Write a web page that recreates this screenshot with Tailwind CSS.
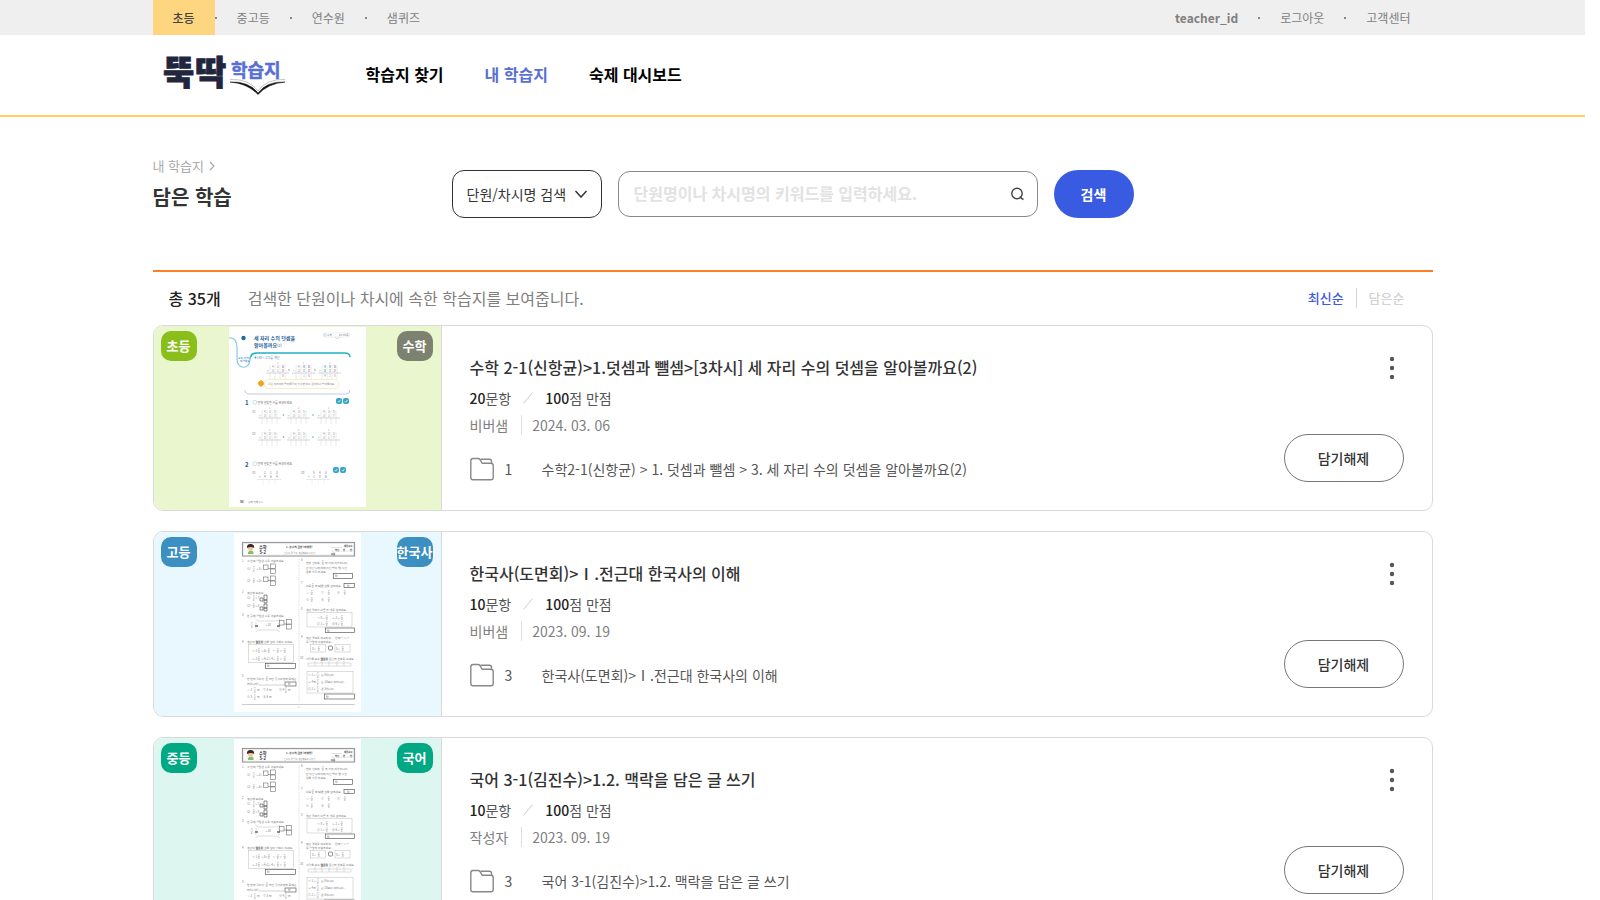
<!DOCTYPE html>
<html lang="ko">
<head>
<meta charset="utf-8">
<meta name="viewport" content="width=device-width, initial-scale=1">
<title>담은 학습</title>
<script src="https://cdn.jsdelivr.net/npm/@tailwindcss/browser@4"></script>
</head>
<body class="bg-white pr-[15px] font-['Noto_Sans_CJK_KR','Noto_Sans',sans-serif] text-sm text-[#333]">

<!-- Shared drawings -->
<svg width="0" height="0" class="absolute" aria-hidden="true">
  <defs>
    <g id="sum">
      <path d="M4 0V14M9 0V14M14 0V14M19 0V14" stroke="#d4d4d4" stroke-width=".5"/>
      <path d="M0 8H23" stroke="#bbb" stroke-width=".6"/>
      <g font-size="3" fill="#888">
        <text x="6" y="3">4</text><text x="11" y="3">3</text><text x="16" y="3">5</text>
        <text x="1" y="7">+</text><text x="6" y="7">3</text><text x="11" y="7">1</text><text x="16" y="7">7</text>
      </g>
      <text x="11" y="-1" font-size="2.5" fill="#e0609a">1</text>
    </g>
    <g id="frac" fill="#777" font-size="2.6"><text x="0" y="-.6">7</text><path d="M-.4 0H2" stroke="#888" stroke-width=".4"/><text x="0" y="2.6">8</text></g>
    <g id="boxes" fill="#fff" stroke="#555" stroke-width=".5">
      <rect x="0" y="1" width="4.5" height="4.5"/><path d="M4.500 4.500H7"/><rect x="7" y="0" width="5" height="4.500"/><rect x="7" y="5" width="5" height="4.500"/>
    </g>
    <g id="tick"><rect width="6" height="6" rx="2" fill="#35a6c6"/><path d="M1.700 3L2.800 4.200L4.500 1.800" stroke="#fff" stroke-width=".7" fill="none"/></g>

    <symbol id="sheet-sum" viewBox="0 0 137 180">
      <rect width="137" height="180" fill="#fff"/>
      <path d="M0 11C6 10 8 15 8 21V32C8 43 21 43 21 32Q21 27 26 27" fill="none" stroke="#86cbe0" stroke-width="1.200"/>
      <circle cx="14.500" cy="11" r="2.200" fill="#1b6da3"/>
      <g font-weight="700" fill="#1f5d98" font-size="5">
        <text x="25" y="13">세 자리 수의 덧셈을</text><text x="25" y="19.500">알아볼까요<tspan font-weight="400" font-size="4">(2)</tspan></text>
      </g>
      <text x="9" y="31.500" font-size="2.600" fill="#2b80b5">교과 개념이<tspan x="11" dy="3">해결돼요</tspan></text>
      <rect x="94" y="6" width="27" height="4" rx="2" fill="#fff" stroke="#ddd" stroke-width=".5"/>
      <rect x="95" y="7" width="2" height="2" fill="none" stroke="#7bc6d6" stroke-width=".4"/>
      <text x="98" y="9" font-size="2.600" fill="#777">수학</text><text x="110" y="9" font-size="2.600" fill="#777">82~85쪽</text>
      <path d="M106 10L108 12L111 10" fill="none" stroke="#bbb" stroke-width=".5"/>
      <path d="M22 30Q22 26 28 26H115Q121 26 121 30" fill="none" stroke="#1eb2c3" stroke-width="1.500"/>
      <path d="M16 63Q16 67 21 67H117Q121 67 121 63" fill="none" stroke="#9ba8c0" stroke-width=".6"/>
      <circle cx="26.500" cy="30.500" r="1" fill="#29a8c8"/><text x="28" y="32" font-size="3" fill="#4a88a8">143 + 272를 계산</text>
      <use href="#sum" x="37" y="38"/><use href="#sum" x="63" y="38"/><use href="#sum" x="89" y="38"/>
      <g font-size="3" fill="#cf62a4"><text x="53" y="41">3</text><text x="53" y="45">2</text><text x="53" y="50">5</text><text x="79" y="41">3</text><text x="79" y="45">2</text><text x="79" y="50">5</text><text x="105" y="41">3</text><text x="105" y="45">2</text><text x="105" y="50">5</text></g>
      <g font-size="3" fill="#35bfae"><text x="74" y="41">4</text><text x="74" y="45">7</text><text x="74" y="50">1</text><text x="95" y="41">1</text><text x="100" y="41">4</text><text x="95" y="45">2</text><text x="100" y="45">7</text><text x="95" y="50">4</text><text x="100" y="50">1</text></g>
      <path d="M32 53L36 56.500L32 60L28.500 56.500Z" fill="#f0a31e"/><circle cx="32" cy="56.300" r="2.600" fill="#f4a51c"/>
      <rect x="35" y="52.500" width="75" height="9" rx="4.500" fill="#fffefa" stroke="#f2dfae" stroke-width=".6"/>
      <text x="39" y="58" font-size="2.700" fill="#888">같은 자리끼리 받아올림이 있으면 바로 윗자리로 받아올려요</text>
      <g font-weight="700" fill="#245b96" font-size="6"><text x="16" y="78">1</text><text x="16" y="139.500">2</text></g>
      <g fill="#fff" stroke="#9fd1e6" stroke-width=".6"><rect x="24" y="73.500" width="3.500" height="3.500" rx="1"/><rect x="24" y="135" width="3.500" height="3.500" rx="1"/></g>
      <g fill="#666" font-size="2.900"><text x="28.500" y="76.500">안에 알맞은 수를 써넣으세요.</text><text x="28.500" y="138">안에 알맞은 수를 써넣으세요.</text>
        <text x="23" y="85.500">(1)</text><text x="23" y="108">(2)</text><text x="23" y="147">(1)</text><text x="72" y="147">(2)</text></g>
      <use href="#tick" x="107" y="71"/><use href="#tick" x="114" y="71"/><use href="#tick" x="104" y="140"/><use href="#tick" x="111" y="140"/>
      <use href="#sum" x="29" y="83"/><use href="#sum" x="58" y="83"/><use href="#sum" x="88" y="83"/>
      <use href="#sum" x="29" y="105"/><use href="#sum" x="58" y="105"/><use href="#sum" x="88" y="105"/>
      <path d="M59 43H61M60 42V44M85 43H87M86 42V44M53.500 88H55.500M54.500 87V89M83 88H85M84 87V89M53.500 110H55.500M54.500 109V111M83 110H85M84 109V111" stroke="#58a89c" stroke-width=".5"/>
      <g font-size="3" fill="#777"><text x="35" y="147">2</text><text x="41" y="147">1</text><text x="47" y="147">3</text><text x="30" y="151">+</text><text x="35" y="151">4</text><text x="41" y="151">6</text><text x="47" y="151">9</text>
        <text x="84" y="147">5</text><text x="90" y="147">4</text><text x="96" y="147">3</text><text x="79" y="151">+</text><text x="84" y="151">1</text><text x="90" y="151">8</text><text x="96" y="151">6</text></g>
      <path d="M28 152.500H52M77 152.500H101" stroke="#ccc" stroke-width=".5"/>
      <path d="M34 153V158M40 153V158M46 153V158M83 153V158M89 153V158M95 153V158" stroke="#e6e6e6" stroke-width=".5"/>
      <text x="11" y="175.500" font-size="3" font-weight="700" fill="#444">50</text><text x="19" y="175.500" font-size="2.600" fill="#777">수학 익힘 2-1</text>
    </symbol>

    <symbol id="sheet-frac" viewBox="0 0 127 179">
      <rect width="127" height="179" fill="#fff"/>
      <rect x="8.500" y="9.500" width="112" height="13.500" fill="#fff" stroke="#999" stroke-width="1.200"/>
      <rect x="9.500" y="10.500" width="110" height="11.500" fill="none" stroke="#ddd" stroke-width=".4"/>
      <path d="M14 21Q13.500 17.500 17 17.500Q20 17.500 19.500 21Z" fill="#86bf65"/><circle cx="16.500" cy="15" r="2.600" fill="#f2c7a0"/><path d="M13 15Q12.500 11 16.500 11Q20.500 11 20.200 15Q17 13 13 15Z" fill="#3a2924"/>
      <g font-weight="700" fill="#333" font-size="4.200"><text x="25" y="15.500">수학</text><text x="25.500" y="20.500">5-2</text></g>
      <text x="52" y="15" font-size="2.700" font-weight="700" fill="#444">1. 분수의 곱셈 (여행편)</text>
      <text x="50" y="21" font-size="2.200" fill="#888">분수의 곱 알고, 계산해보고 나누기</text>
      <g font-size="2.300" fill="#444" font-weight="700"><text x="110" y="13.500">채점하고</text><text x="101" y="17.500">학년</text><text x="109" y="17.500">반</text><text x="116" y="17.500">번</text><text x="97" y="21.500">이름</text></g>
      <path d="M97 14.500H108M97 18H119" stroke="#bbb" stroke-width=".4"/>
      <path d="M65 26V169" stroke="#aaa" stroke-width=".4" stroke-dasharray="1 .8"/>
      <path d="M8 171.500H120.500" stroke="#aaa" stroke-width=".6"/><text x="64" y="175" font-size="2.500" fill="#777">1</text>
      <g font-size="2.800" fill="#777">
        <text x="8" y="28.500">1</text><text x="13" y="29">그 안에 알맞은 수를 써넣으세요.</text>
        <text x="13" y="37">(1)</text><text x="22" y="37">×2=</text><text x="13" y="48.500">(2)</text><text x="22" y="48.500">×3=</text>
        <text x="8" y="60">2</text><text x="13" y="60.500">계산해 보세요.</text>
        <text x="13" y="66">(1)</text><text x="21" y="66">×7</text><text x="13" y="73.500">(2)</text><text x="21" y="73.500">×5</text>
        <text x="8" y="82.500">3</text><text x="13" y="83.500">빈 곳에 알맞은 수를 써넣으세요.</text><text x="31" y="93">×10</text>
        <text x="8" y="109.500">4</text><text x="13" y="110">계산이 <tspan font-weight="700" fill="#333">잘못된</tspan> 것을 찾아 기호로 쓰세요.</text>
        <text x="18" y="118.500">㉠ 1</text><text x="27" y="118.500">×3=</text><text x="39" y="118.500">+</text><text x="46" y="118.500">=</text>
        <text x="18" y="126.500">㉡ 2</text><text x="27" y="126.500">×4=2×4×</text><text x="46" y="126.500">=</text>
        <text x="8" y="144">5</text><text x="13" y="147">한 변의 길이가</text><text x="35" y="147">m인 정사각형의 둘레는</text><text x="13" y="152">m입니까?</text>
        <text x="13" y="158">① 2</text><text x="23" y="158">m</text><text x="29" y="158">② 3 m</text><text x="45" y="158">③ 4</text><text x="54" y="158">m</text><text x="13" y="165">④ 5</text><text x="23" y="165">m</text><text x="29" y="165">⑤ 6 m</text>
        <text x="67" y="28">6</text><text x="72" y="30.500">한비 선비에</text><text x="91" y="30.500">의 거리 지났습니다.</text><text x="72" y="35.500">만 지난 나머지에 지난 밤이 몇 시간</text><text x="72" y="39.500">양을 기록 하세요.</text>
        <text x="67" y="50.500">7</text><text x="72" y="53.500">다음</text><text x="81" y="53.500">와 <tspan font-weight="700">다른</tspan> 것을 찾으세요.</text>
        <text x="72" y="60.500">①</text><text x="87" y="60.500">②</text><text x="103" y="60.500">③</text><text x="72" y="67.500">④</text><text x="87" y="67.500">⑤</text>
        <text x="67" y="77">8</text><text x="72" y="78">계산 결과가 다른 두 개를 찾으세요.</text>
        <text x="83" y="85.500">㉠ 8×</text><text x="98" y="85.500">㉡ 2×</text><text x="83" y="91.500">㉢ 1×</text><text x="98" y="91.500">㉣ 6×</text>
        <text x="67" y="105">9</text><text x="72" y="106">계산 결과를 비교하여 ○ 안에 &gt;, =, &lt;</text><text x="72" y="110">를 알맞게 써넣으세요.</text><text x="78" y="116.500">3×</text><text x="102" y="116.500">5×</text>
        <text x="66" y="125.500">10</text><text x="72" y="126.500">그림을 보고 <tspan font-weight="700" fill="#333">잘못된</tspan> 문장의 번호를 쓰세요.</text>
        <text x="74" y="143">㉠ 1×</text><text x="87" y="143">는 8입니다.</text><text x="74" y="150">㉡ 4의</text><text x="87" y="150">는 10보다 작습니다.</text><text x="74" y="157">㉢ 2×</text><text x="87" y="157">은 3입니다.</text>
      </g>
      <use href="#frac" x="19" y="36"/><use href="#frac" x="19" y="47.500"/><use href="#frac" x="19" y="65"/><use href="#frac" x="19" y="72.500"/><use href="#frac" x="17" y="92"/>
      <use href="#frac" x="24" y="117.500"/><use href="#frac" x="34" y="117.500"/><use href="#frac" x="43" y="117.500"/><use href="#frac" x="50" y="117.500"/><use href="#frac" x="24" y="125.500"/><use href="#frac" x="43" y="125.500"/><use href="#frac" x="50" y="125.500"/>
      <use href="#frac" x="32" y="145.500"/><use href="#frac" x="20" y="157"/><use href="#frac" x="51" y="157"/><use href="#frac" x="20" y="164"/>
      <use href="#frac" x="88" y="29.500"/><use href="#frac" x="78" y="52.500"/><use href="#frac" x="77" y="59.500"/><use href="#frac" x="94" y="59.500"/><use href="#frac" x="110" y="59.500"/><use href="#frac" x="77" y="66.500"/><use href="#frac" x="94" y="66.500"/>
      <use href="#frac" x="92" y="84.500"/><use href="#frac" x="107" y="84.500"/><use href="#frac" x="92" y="90.500"/><use href="#frac" x="107" y="90.500"/><use href="#frac" x="84" y="115.500"/><use href="#frac" x="108" y="115.500"/>
      <use href="#frac" x="83" y="142"/><use href="#frac" x="83" y="149"/><use href="#frac" x="83" y="156"/>
      <use href="#boxes" x="29.500" y="31"/><use href="#boxes" x="29.500" y="43"/><use href="#boxes" x="45.500" y="86.500"/>
      <g fill="#fff" stroke="#444" stroke-width=".6">
        <path d="M30 62H33V67H30ZM26 65H29V68H26ZM30 67H33V70H30ZM30 71H33V75H30ZM26 74H29V77H26ZM30 75H33V78H30Z"/>
        <rect x="31.500" y="130.500" width="30" height="5"/><rect x="51" y="149" width="11" height="4"/><rect x="99.500" y="40.500" width="19" height="5"/><rect x="110" y="50.500" width="10.500" height="4"/><rect x="91.500" y="95" width="29" height="4.500"/><rect x="90.500" y="161" width="30" height="5"/><rect x="94.500" y="113" width="4" height="4" rx="1"/>
      </g>
      <g font-size="2.800" fill="#555"><text x="33" y="134">답</text><text x="54" y="152">답</text><text x="101" y="44">답</text><text x="113" y="53.500">답</text><text x="93" y="98.500">답</text><text x="92" y="164.500">답</text></g>
      <g fill="none" stroke="#aaa" stroke-width=".4">
        <path d="M21.500 86L24 88H43L46 86M21.500 99L24 97H43L46 99M22 89V96M45 89V96"/>
        <rect x="14.500" y="111.500" width="45" height="18"/><rect x="73" y="79.500" width="45" height="14.500"/><rect x="76.500" y="111.500" width="15" height="7.500"/><rect x="101" y="111.500" width="15" height="7.500"/><rect x="73" y="138.500" width="46" height="21.500"/>
        <path d="M74 130H117V133H74ZM81 128V133M88 128V133M95 128V133M103 128V133M110 128V133"/>
      </g>
      <path d="M21 93H24M43 93H46" stroke="#222" stroke-width="1.200"/>
      <path d="M24.500 152H50" stroke="#888" stroke-width=".4"/>
    </symbol>

    <symbol id="folder" viewBox="0 0 24 24">
      <path d="M.8 4V20.500Q.8 22.700 3 22.700H21Q23.200 22.700 23.200 20.500V8.500Q23.200 6.300 21 6.300H12.300L10 2.600Q9.300 1.500 8 1.500H3Q.8 1.500 .8 4Z"/>
      <path d="M10.500 2.300H19.500Q21.500 2.300 21.500 4.300V6"/>
    </symbol>
    <symbol id="kebab" viewBox="0 0 8 24"><circle cx="4" cy="3" r="2.200"/><circle cx="4" cy="12" r="2.200"/><circle cx="4" cy="21" r="2.200"/></symbol>
  </defs>
</svg>

<header>
  <div class="bg-[#efefef]">
    <div class="mx-auto flex h-[35px] max-w-[1280px] items-center justify-between text-xs text-[#808080]">
      <nav class="flex h-full items-center" aria-label="서비스">
        <a href="#" class="flex h-full items-center bg-[#ffd680] px-5 font-medium text-[#444]">초등</a>
        <span class="size-0.5 bg-[#888]"></span><a href="#" class="px-5">중고등</a>
        <span class="size-0.5 bg-[#888]"></span><a href="#" class="px-5">연수원</a>
        <span class="size-0.5 bg-[#888]"></span><a href="#" class="px-5">샘퀴즈</a>
      </nav>
      <nav class="mr-0.5 flex items-center" aria-label="계정">
        <a href="#" class="px-5 font-bold">teacher_id</a>
        <span class="size-0.5 bg-[#888]"></span><a href="#" class="px-5">로그아웃</a>
        <span class="size-0.5 bg-[#888]"></span><a href="#" class="px-5">고객센터</a>
      </nav>
    </div>
  </div>
  <div class="border-b-2 border-[#ffd05b]">
    <div class="mx-auto flex h-20 max-w-[1280px] items-center">
      <a href="#" class="ml-1.5" aria-label="뚝딱 학습지">
        <svg width="130" height="54" viewBox="-4 -4 130 54" class="block overflow-visible">
          <g fill="#1f263d" stroke="#1f263d" stroke-width=".8" font-weight="900" font-size="34"><text x="0" y="33">뚝</text><text x="32" y="33">딱</text></g>
          <text x="68" y="25" font-weight="700" font-size="18" fill="#5870d4" stroke="#5870d4" stroke-width=".5">학습지</text>
          <path d="M67 30Q86 29 95 41Q104 29 122 30Q105 31.500 95 42.500Q85 31.500 67 30Z" fill="#111" stroke="#111" stroke-width=".5"/>
          <path d="M67 27.500Q86 26.500 95 39Q104 26.500 122 27.500" fill="none" stroke="#aaa" stroke-width=".7"/>
        </svg>
      </a>
      <nav class="ml-[77px] flex gap-[41px] pb-0.5 text-base font-bold text-black" aria-label="주 메뉴">
        <a href="#">학습지 찾기</a>
        <a href="#" class="text-[#5870d4]" aria-current="page">내 학습지</a>
        <a href="#">숙제 대시보드</a>
      </nav>
    </div>
  </div>
</header>

<main class="mx-auto max-w-[1280px] pb-10">
  <div class="flex items-start border-b-2 border-[#ff7f27] pt-[39px] pb-[52px]">
    <div class="w-[299px]">
      <a href="#" class="flex items-center gap-[5px] text-[13px] leading-5 text-[#aaa]">내 학습지
        <svg width="6" height="10" viewBox="0 0 6 10" fill="none" stroke="#aaa" stroke-width="1.200"><path d="M1 1L5 5L1 9"/></svg>
      </a>
      <h1 class="mt-1.5 text-xl leading-[30px] font-bold">담은 학습</h1>
    </div>
    <form class="mt-3.5 flex items-center gap-4" onsubmit="return false">
      <div class="relative">
        <select aria-label="검색 기준" class="block h-12 w-[150px] appearance-none rounded-xl border border-[#333] bg-white pl-3.5 text-sm text-[#333]">
          <option>단원/차시명 검색</option>
        </select>
        <svg class="pointer-events-none absolute top-5 right-3.5" width="14" height="8" viewBox="0 0 14 8" fill="none" stroke="#333" stroke-width="1.500"><path d="M1.500 1L7 7L12.500 1"/></svg>
      </div>
      <div class="relative">
        <input type="text" aria-label="키워드" placeholder="단원명이나 차시명의 키워드를 입력하세요." class="block h-[46px] w-[420px] rounded-xl border border-[#888] pr-10 pb-0.5 pl-[15px] text-base font-bold placeholder:text-[#e2e2e2]">
        <svg class="pointer-events-none absolute top-4 right-[13px]" width="15" height="14" viewBox="0 0 15 14" fill="none" stroke="#444" stroke-width="1.400"><circle cx="7" cy="6.500" r="5.200"/><path d="M10 9.500L11.500 11.500L13.500 12.500"/></svg>
      </div>
      <button type="submit" class="h-12 w-20 rounded-[24px] bg-[#385be2] text-sm font-bold text-white">검색</button>
    </form>
  </div>

  <div class="flex h-[53px] items-center justify-between pr-7 pb-px pl-4">
    <p class="flex gap-[27px] text-base text-[#808080]"><strong class="font-medium text-[#222]">총 35개</strong>검색한 단원이나 차시에 속한 학습지를 보여줍니다.</p>
    <div class="flex items-center gap-3 text-[13px] font-medium">
      <button type="button" class="text-[#3c59e0]">최신순</button>
      <span class="h-5 w-px bg-[#d5d5d5]"></span>
      <button type="button" class="text-[#d2d2d2]">담은순</button>
    </div>
  </div>

  <ul class="flex flex-col gap-5">
    <li class="flex overflow-hidden rounded-[10px] border border-[#d9d9d9]">
      <div class="relative flex w-[288px] shrink-0 justify-center border-r border-[#d9d9d9] bg-[#eaf7ce] pt-px">
        <svg width="137" height="180" role="img" aria-label="학습지 미리보기"><use href="#sheet-sum"/></svg>
        <span class="absolute top-[5px] left-[7px] flex h-[30px] w-9 items-center justify-center rounded-[10px] bg-[#8abf1b] text-[13px] font-bold whitespace-nowrap text-white">초등</span>
        <span class="absolute top-[5px] right-2 flex h-[30px] w-9 items-center justify-center rounded-[10px] bg-[#7d8170] text-[13px] font-bold whitespace-nowrap text-white">수학</span>
      </div>
      <div class="flex flex-1 justify-between px-7 pt-[29px] pb-7">
        <div class="pb-px">
          <h2 class="text-base leading-6 font-medium">수학 2-1(신항균)&gt;1.덧셈과 뺄셈&gt;[3차시] 세 자리 수의 덧셈을 알아볼까요(2)</h2>
          <p class="mt-[7px] flex items-center gap-3 leading-6 text-[#555]"><span><b class="font-medium text-[#222]">20</b>문항</span><svg width="10" height="12" viewBox="0 0 10 12" stroke="#ccc"><path d="M.5 11.500L9.500 .5"/></svg><span><b class="font-medium text-[#222]">100</b>점 만점</span></p>
          <p class="mt-[5px] flex gap-2.5 leading-5 text-[#808080]"><span class="border-r border-[#ddd] pr-[13px]">비버샘</span><time datetime="2024-03-06">2024. 03. 06</time></p>
          <p class="mt-[22px] flex items-center leading-6 text-[#555]"><svg width="24" height="24" fill="none" stroke="#888" stroke-width="1.400"><use href="#folder"/></svg><span class="ml-[11px] w-[37px]">1</span>수학2-1(신항균) &gt; 1. 덧셈과 뺄셈 &gt; 3. 세 자리 수의 덧셈을 알아볼까요(2)</p>
        </div>
        <div class="flex flex-col items-end justify-between pt-px">
          <button type="button" aria-label="더보기" class="mr-2"><svg width="8" height="24" fill="#555"><use href="#kebab"/></svg></button>
          <button type="button" class="h-12 w-[120px] rounded-full border border-[#777] text-sm font-medium">담기해제</button>
        </div>
      </div>
    </li>

    <li class="flex overflow-hidden rounded-[10px] border border-[#d9d9d9]">
      <div class="relative flex w-[288px] shrink-0 justify-center border-r border-[#d9d9d9] bg-[#e9f7ff] pt-px">
        <svg width="127" height="179" role="img" aria-label="학습지 미리보기"><use href="#sheet-frac"/></svg>
        <span class="absolute top-[5px] left-[7px] flex h-[30px] w-9 items-center justify-center rounded-[10px] bg-[#3b8fc1] text-[13px] font-bold whitespace-nowrap text-white">고등</span>
        <span class="absolute top-[5px] right-2 flex h-[30px] w-9 items-center justify-center rounded-[10px] bg-[#3b8fc1] text-[13px] font-bold whitespace-nowrap text-white">한국사</span>
      </div>
      <div class="flex flex-1 justify-between px-7 pt-[29px] pb-7">
        <div class="pb-px">
          <h2 class="text-base leading-6 font-medium">한국사(도면회)&gt;Ⅰ.전근대 한국사의 이해</h2>
          <p class="mt-[7px] flex items-center gap-3 leading-6 text-[#555]"><span><b class="font-medium text-[#222]">10</b>문항</span><svg width="10" height="12" viewBox="0 0 10 12" stroke="#ccc"><path d="M.5 11.500L9.500 .5"/></svg><span><b class="font-medium text-[#222]">100</b>점 만점</span></p>
          <p class="mt-[5px] flex gap-2.5 leading-5 text-[#808080]"><span class="border-r border-[#ddd] pr-[13px]">비버샘</span><time datetime="2023-09-19">2023. 09. 19</time></p>
          <p class="mt-[22px] flex items-center leading-6 text-[#555]"><svg width="24" height="24" fill="none" stroke="#888" stroke-width="1.400"><use href="#folder"/></svg><span class="ml-[11px] w-[37px]">3</span>한국사(도면회)&gt;Ⅰ.전근대 한국사의 이해</p>
        </div>
        <div class="flex flex-col items-end justify-between pt-px">
          <button type="button" aria-label="더보기" class="mr-2"><svg width="8" height="24" fill="#555"><use href="#kebab"/></svg></button>
          <button type="button" class="h-12 w-[120px] rounded-full border border-[#777] text-sm font-medium">담기해제</button>
        </div>
      </div>
    </li>

    <li class="flex overflow-hidden rounded-[10px] border border-[#d9d9d9]">
      <div class="relative flex w-[288px] shrink-0 justify-center border-r border-[#d9d9d9] bg-[#ddf6ef] pt-px">
        <svg width="127" height="179" role="img" aria-label="학습지 미리보기"><use href="#sheet-frac"/></svg>
        <span class="absolute top-[5px] left-[7px] flex h-[30px] w-9 items-center justify-center rounded-[10px] bg-[#00a984] text-[13px] font-bold whitespace-nowrap text-white">중등</span>
        <span class="absolute top-[5px] right-2 flex h-[30px] w-9 items-center justify-center rounded-[10px] bg-[#00a984] text-[13px] font-bold whitespace-nowrap text-white">국어</span>
      </div>
      <div class="flex flex-1 justify-between px-7 pt-[29px] pb-7">
        <div class="pb-px">
          <h2 class="text-base leading-6 font-medium">국어 3-1(김진수)&gt;1.2. 맥락을 담은 글 쓰기</h2>
          <p class="mt-[7px] flex items-center gap-3 leading-6 text-[#555]"><span><b class="font-medium text-[#222]">10</b>문항</span><svg width="10" height="12" viewBox="0 0 10 12" stroke="#ccc"><path d="M.5 11.500L9.500 .5"/></svg><span><b class="font-medium text-[#222]">100</b>점 만점</span></p>
          <p class="mt-[5px] flex gap-2.5 leading-5 text-[#808080]"><span class="border-r border-[#ddd] pr-[13px]">작성자</span><time datetime="2023-09-19">2023. 09. 19</time></p>
          <p class="mt-[22px] flex items-center leading-6 text-[#555]"><svg width="24" height="24" fill="none" stroke="#888" stroke-width="1.400"><use href="#folder"/></svg><span class="ml-[11px] w-[37px]">3</span>국어 3-1(김진수)&gt;1.2. 맥락을 담은 글 쓰기</p>
        </div>
        <div class="flex flex-col items-end justify-between pt-px">
          <button type="button" aria-label="더보기" class="mr-2"><svg width="8" height="24" fill="#555"><use href="#kebab"/></svg></button>
          <button type="button" class="h-12 w-[120px] rounded-full border border-[#777] text-sm font-medium">담기해제</button>
        </div>
      </div>
    </li>
  </ul>
</main>
</body>
</html>
